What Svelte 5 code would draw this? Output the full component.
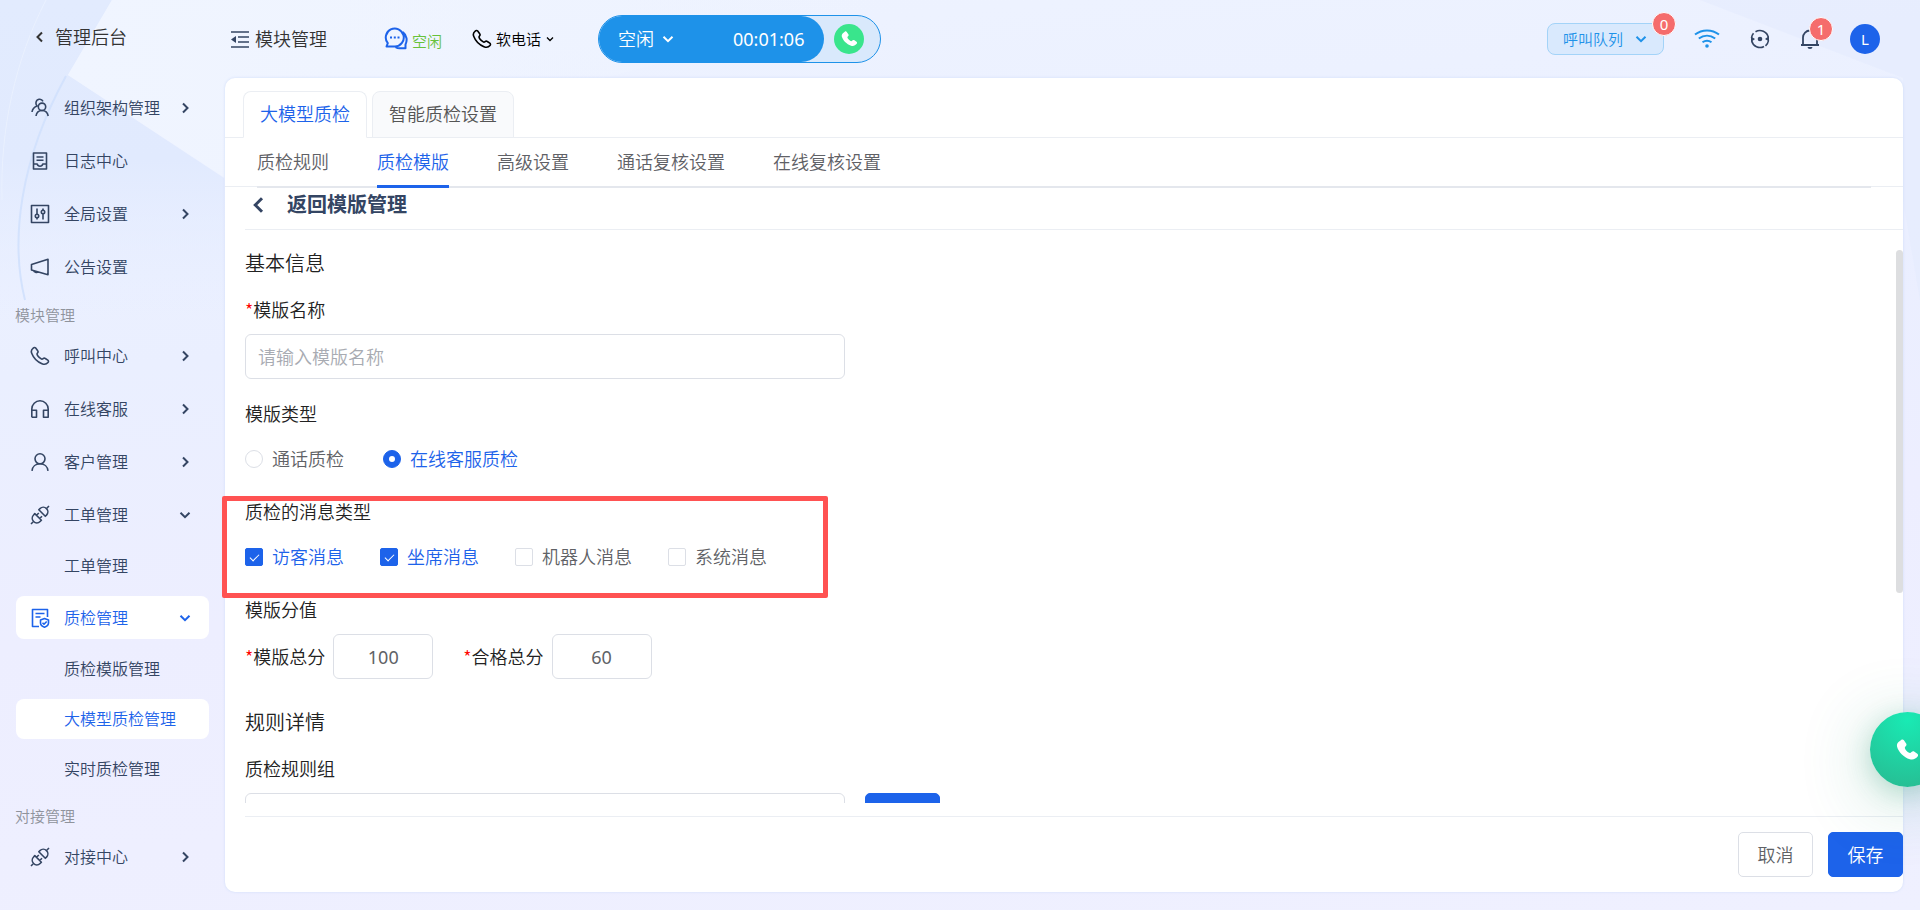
<script lang="ts">
  type Item = { label: string; icon?: string; arrow?: "right" | "down"; kind?: "sub" | "title"; active?: boolean };

  const menu: Item[] = [
    { label: "组织架构管理", icon: "org", arrow: "right" },
    { label: "日志中心", icon: "log" },
    { label: "全局设置", icon: "sliders", arrow: "right" },
    { label: "公告设置", icon: "horn" },
    { label: "模块管理", kind: "title" },
    { label: "呼叫中心", icon: "phone", arrow: "right" },
    { label: "在线客服", icon: "headset", arrow: "right" },
    { label: "客户管理", icon: "user", arrow: "right" },
    { label: "工单管理", icon: "plug", arrow: "down" },
    { label: "工单管理", kind: "sub" },
    { label: "质检管理", icon: "check", arrow: "down", active: true },
    { label: "质检模版管理", kind: "sub" },
    { label: "大模型质检管理", kind: "sub", active: true },
    { label: "实时质检管理", kind: "sub" },
    { label: "对接管理", kind: "title" },
    { label: "对接中心", icon: "plug", arrow: "right" },
  ];

  const tabs = ["大模型质检", "智能质检设置"];
  const subTabs = ["质检规则", "质检模版", "高级设置", "通话复核设置", "在线复核设置"];
  const types = ["通话质检", "在线客服质检"];

  let tab = $state("大模型质检");
  let subTab = $state("质检模版");
  let name = $state("");
  let type = $state("在线客服质检");
  let total = $state("100");
  let pass = $state("60");
  let messages = $state([
    { label: "访客消息", checked: true },
    { label: "坐席消息", checked: true },
    { label: "机器人消息", checked: false },
    { label: "系统消息", checked: false },
  ]);
</script>

{#snippet chevron(dir: string, size: number)}
  <svg class="chevron" width={size} height={size} viewBox="0 0 12 12">
    {#if dir === "right"}
      <path d="M4 1.5 8.5 6 4 10.5" />
    {:else if dir === "left"}
      <path d="M8 1.5 3.5 6 8 10.5" />
    {:else}
      <path d="M1.5 3.8 6 8.2 10.5 3.8" />
    {/if}
  </svg>
{/snippet}

{#snippet icon(name: string)}
  <svg class="icon" width="20" height="20" viewBox="0 0 20 20">
    {#if name === "org"}
      <circle cx="12" cy="8.800" r="3.700" />
      <path d="M6 18c.5-3.300 2.800-5.500 6-5.500s5.600 2.200 6.200 5.500M13 3.300A3.700 3.700 0 0 0 6 4.500c-.2 1.300.2 2.500 1.200 3.500C4.500 8.800 2.500 10.800 2 14" />
    {:else if name === "log"}
      <path d="M3.500 2h13v16h-13zM6.500 6h7M6.500 9.200h7M3.500 13h3.700c.4 1.500 1.300 2.200 2.800 2.200s2.400-.7 2.800-2.200h3.700" />
    {:else if name === "sliders"}
      <path d="M1.500 1.500h17v17h-17zM7 4.500v6M7 14v1.500M13 4.500v2M13 10v5.500" />
      <circle cx="7" cy="12" r="1.700" />
      <circle cx="13" cy="8" r="1.700" />
    {:else if name === "horn"}
      <path d="M1.500 7.500 18 2.200v15.600L1.500 13zM3.500 13.500c.2 1.700 3.500 2.500 4.700 1.300" />
    {:else if name === "phone"}
      <path d="M3.200 2.200C4 1.300 5 1.200 5.700 2L7.700 4.800c.6.800.4 1.500-.2 2.200-.8.900-.7 1.500.2 2.700 1 1.300 2 2.200 3.200 3 .9.600 1.500.5 2.200-.1.700-.6 1.500-.7 2.200-.1l2.500 1.700c.8.600.9 1.500.2 2.300-1.400 1.700-3.700 2.200-6 1.200-4.800-2-8.700-6.200-10.300-10.500C.8 5.200 1.500 3.600 3.200 2.200z" />
    {:else if name === "headset"}
      <path d="M1.800 18.200V10a8.200 8.200 0 0 1 16.400 0v8.200h-4.700v-7h4.700M1.800 11.200h4.700v7H1.800" />
    {:else if name === "user"}
      <circle cx="10" cy="6.800" r="5" />
      <path d="M2 18.800c.4-4 3.500-7 8-7s7.600 3 8 7" />
    {:else if name === "plug"}
      <path d="M1 19l2-2M17 3l2-2M4.800 8.600l6.600 6.600-1.300 1.300a4.600 4.600 0 0 1-6.500 0 4.600 4.600 0 0 1 0-6.500zM8.800 4.800l6.500 6.500 1.200-1.200a4.600 4.600 0 0 0 0-6.500 4.600 4.600 0 0 0-6.500 0zM6.500 10.300l2.300-2.300M9.700 13.500l2.300-2.300" />
    {:else}
      <path d="M9 18.500H2.500v-17h15v7.500M5.500 5.500h9M5.500 9h5" />
      <path d="M14.500 10.500l4 1.500v3c0 2-1.500 3.300-4 4.200-2.500-.9-4-2.200-4-4.200v-3zM12.500 14.700l1.500 1.500 2.700-2.700" />
    {/if}
  </svg>
{/snippet}

{#snippet handset(size: number)}
  <svg class="handset" width={size} height={size} viewBox="0 0 20 20">
    <path d="M2.300 2.800 4.700.8c.8-.6 1.900-.5 2.500.3l2 2.900c.6.900.4 1.900-.4 2.600-1 .9-1 1.600-.2 2.900.9 1.300 1.700 2 2.900 2.800 1 .6 1.700.5 2.600-.4.800-.8 1.800-.9 2.700-.3l2.600 1.900c.8.600.9 1.700.2 2.500-1.500 2-4 3.300-7 2.400C7 16.800 2.200 11.500 1 7 .6 5.400 1.100 3.900 2.300 2.800z" />
  </svg>
{/snippet}

<div class="layout">
  <svg class="backdrop" viewBox="0 0 1920 910" preserveAspectRatio="none" aria-hidden="true">
    <defs>
      <linearGradient id="shade" x1="0" y1="0" x2="0" y2="1">
        <stop offset="0" stop-color="#e2ebfe" />
        <stop offset=".5" stop-color="#e1eafe" />
        <stop offset="1" stop-color="#e6edff" stop-opacity="0" />
      </linearGradient>
      <linearGradient id="light" x1="0" y1="0" x2="1" y2="0">
        <stop offset="0" stop-color="#f0f5ff" />
        <stop offset="1" stop-color="#f0f5ff" stop-opacity="0" />
      </linearGradient>
    </defs>
    <path d="M0 0H112L68 75 224 178V320H0z" fill="url(#shade)" />
    <path d="M112 0H900L225 178 68 75z" fill="url(#light)" />
    <path d="M66 76C20 160 10 240 25 300" fill="none" stroke="#d3e2fd" stroke-width="2" />
    <path d="M46 0C15 60 0 130 2 200" fill="none" stroke="#eaf1ff" stroke-width="1" />
    <path d="M1700 0H1920V300L1903 200V78z" fill="#e4ebfe" opacity=".6" />
  </svg>

  <aside class="sidebar">
    <a class="home" href="#home">{@render chevron("left", 12)}<span>管理后台</span></a>
    <nav class="menu">
      {#each menu as item}
        {#if item.kind === "title"}
          <div class="menu-title">{item.label}</div>
        {:else}
          <a href="#menu" class="menu-item" class:sub={item.kind === "sub"} class:active={item.active}>
            {#if item.icon}{@render icon(item.icon)}{/if}
            <span>{item.label}</span>
            {#if item.arrow}{@render chevron(item.arrow, 12)}{/if}
          </a>
        {/if}
      {/each}
    </nav>
  </aside>

  <div class="main">
    <header class="topbar">
      <button class="plain module">
        <svg width="18" height="18" viewBox="0 0 18 18">
          <path d="M0 2h18M7 7h11M7 12h11M0 17h18" fill="none" stroke="#344563" stroke-width="1.600" />
          <path d="M5 6v7L0 9.500z" fill="#344563" />
        </svg>
        模块管理
      </button>
      <button class="plain chat">
        <svg width="24" height="24" viewBox="0 0 24 24">
          <path d="M2.500 19.500l1.300-3.300A9 9 0 1 1 11 19.500zM18.800 5c4.500 3.500 4.500 9 2.700 12.500v3.800H15.500c-1.500 0-2.700-.4-3.800-1.200" fill="none" stroke="#1d63ea" stroke-width="2" stroke-linejoin="round" />
          <path d="M6 10.500h2M9.800 10.500h2M13.500 10.500h2" stroke="#1d63ea" stroke-width="2" />
        </svg>
        <span>空闲</span>
      </button>
      <button class="plain softphone">
        {@render icon("phone")}
        <span>软电话</span>
        {@render chevron("down", 8)}
      </button>
      <div class="call">
        <button class="call-state">
          <span>空闲</span>
          {@render chevron("down", 12)}
          <time>00:01:06</time>
        </button>
        <button class="call-dial" aria-label="拨号">{@render handset(16)}</button>
      </div>

      <div class="tools">
        <button class="queue">
          呼叫队列 {@render chevron("down", 12)}
          <span class="badge">0</span>
        </button>
        <svg class="wifi" width="26" height="20" viewBox="0 0 26 20">
          <path d="M1 5.500c7-5.400 17-5.400 24 0M4.800 9.500c5-3.800 11.400-3.800 16.400 0M8.500 13.300c2.800-2 6.200-2 9 0" />
          <circle cx="13" cy="17" r="1.800" />
        </svg>
        <button class="plain refresh" aria-label="刷新">
          <svg width="20" height="20" viewBox="0 0 20 20">
            <path d="M5.500 2.800a8.500 8.500 0 0 1 12.800 5.500M18.500 11.500a8.500 8.500 0 0 1-3 5.300M14 17.500A8.500 8.500 0 0 1 1.700 12M1.500 9a8.500 8.500 0 0 1 2-4.700" fill="none" stroke="#344563" stroke-width="1.600" />
            <circle cx="10" cy="10" r="2.300" fill="#344563" />
            <path d="M19 7v5.500l-4-2.500zM1 13V7.500l4 2.500z" fill="#344563" />
          </svg>
        </button>
        <button class="plain bell" aria-label="通知">
          <svg width="20" height="20" viewBox="0 0 20 20">
            <path d="M1 16h18M3 16V8.500a7 7 0 0 1 14 0V16M10 1V0" fill="none" stroke="#344563" stroke-width="1.800" />
            <path d="M7.500 18h5a2.500 2 0 0 1-5 0z" fill="#344563" />
          </svg>
          <span class="badge">1</span>
        </button>
        <button class="avatar">L</button>
      </div>
    </header>

    <section class="card">
      <div class="tabs">
        {#each tabs as t}
          <button class="tab" class:active={tab === t} onclick={() => (tab = t)}>{t}</button>
        {/each}
      </div>
      <div class="sub-tabs">
        <div class="sub-tabs-inner">
          {#each subTabs as t}
            <button class="sub-tab" class:active={subTab === t} onclick={() => (subTab = t)}>{t}</button>
          {/each}
        </div>
      </div>

      <a class="back" href="#templates">{@render chevron("left", 18)}<span>返回模版管理</span></a>

      <div class="scroll-wrap">
        <form id="template" class="scroll">
          <h2>基本信息</h2>
          <label class="field-label" for="name"><i>*</i>模版名称</label>
          <input id="name" class="text wide" type="text" placeholder="请输入模版名称" bind:value={name} />

          <fieldset class="type">
            <legend>模版类型</legend>
            <div class="choices radios">
              {#each types as t}
                <label><input type="radio" name="type" value={t} bind:group={type} /><span>{t}</span></label>
              {/each}
            </div>
          </fieldset>

          <fieldset class="messages">
            <legend>质检的消息类型</legend>
            <div class="choices">
              {#each messages as m}
                <label><input type="checkbox" bind:checked={m.checked} /><span>{m.label}</span></label>
              {/each}
            </div>
            <div class="highlight"></div>
          </fieldset>

          <fieldset class="score">
            <legend>模版分值</legend>
            <div class="scores">
              <label for="total"><i>*</i>模版总分</label>
              <input id="total" class="text" type="text" bind:value={total} />
              <label for="pass"><i>*</i>合格总分</label>
              <input id="pass" class="text" type="text" bind:value={pass} />
            </div>
          </fieldset>

          <h2 class="rules">规则详情</h2>
          <label class="field-label" for="group">质检规则组</label>
          <div class="group">
            <input id="group" class="text wide" type="text" />
            <button type="button" class="primary" aria-label="添加规则组"></button>
          </div>
        </form>
        <div class="thumb"></div>
      </div>

      <footer>
        <button class="secondary">取消</button>
        <button class="primary">保存</button>
      </footer>
    </section>
  </div>

  <div class="fab-layer">
    <button class="fab" aria-label="电话">{@render handset(22)}</button>
  </div>
</div>

<style>
  :global(body) {
    margin: 0;
    background: #edf0ff;
    color: #222;
    font-family: "Noto Sans", "Noto Sans CJK SC", sans-serif;
    font-size: 18px;
    font-weight: 350;
    line-height: 24px;
  }
  button,
  input {
    font: inherit;
    box-sizing: border-box;
  }
  button {
    cursor: pointer;
    padding: 0;
    white-space: nowrap;
  }
  a {
    text-decoration: none;
  }
  svg {
    flex: none;
    display: block;
  }
  .chevron {
    fill: none;
    stroke: currentColor;
    stroke-width: 2;
  }
  .icon {
    fill: none;
    stroke: currentColor;
    stroke-width: 1.600;
    stroke-linejoin: round;
  }
  .handset {
    fill: currentColor;
  }

  .layout {
    position: relative;
    display: flex;
    height: 100vh;
    min-height: 600px;
    background: linear-gradient(175deg, #eef3ff 0%, #eaefff 35%, #edeeff 60%, #eff0ff 100%);
  }
  .backdrop {
    position: absolute;
    inset: 0;
    width: 100%;
    height: 100%;
  }
  .sidebar {
    position: relative;
    flex: none;
    width: 225px;
    color: #344563;
    font-size: 16px;
  }
  .home {
    display: flex;
    align-items: center;
    gap: 9px;
    height: 73px;
    padding-left: 34px;
    color: #333;
    font-size: 18px;
  }
  .menu {
    display: flex;
    flex-direction: column;
    gap: 10px;
    padding: 13px 16px 0;
  }
  .menu-item {
    display: flex;
    align-items: center;
    height: 43px;
    padding: 0 18px 0 14px;
    border-radius: 8px;
    color: inherit;
  }
  .menu-item span {
    flex: 1;
    margin-left: 14px;
  }
  .menu-item.sub {
    height: 40px;
    padding-left: 34px;
  }
  .menu-item.active {
    background: #fff;
    color: #1d63ea;
  }
  .menu-title {
    height: 21px;
    margin-left: -1px;
    padding-top: 5px;
    color: #8f939c;
    font-size: 15px;
  }

  .main {
    position: relative;
    flex: 1;
    min-width: 0;
    display: flex;
    flex-direction: column;
    padding: 0 17px 18px 0;
  }
  .topbar {
    display: flex;
    align-items: center;
    flex: none;
    height: 78px;
    padding-left: 6px;
  }
  .plain {
    display: flex;
    align-items: center;
    border: 0;
    background: none;
    color: #333;
  }
  .module {
    gap: 6px;
  }
  .chat {
    gap: 4px;
    margin-left: 57px;
    font-size: 15px;
  }
  .chat span {
    padding-top: 3px;
    color: #67c23a;
  }
  .softphone {
    gap: 4px;
    margin-left: 30px;
    color: #000;
    font-size: 15px;
  }
  .softphone .chevron {
    margin-left: 1px;
  }
  .call {
    display: flex;
    align-items: center;
    gap: 10px;
    box-sizing: border-box;
    height: 48px;
    margin-left: 44px;
    padding-right: 16px;
    border: 1px solid #1e92e9;
    border-radius: 24px;
    background: #d9e9fc;
  }
  .call-state {
    display: flex;
    align-items: center;
    gap: 8px;
    height: 46px;
    padding: 0 20px 0 19px;
    border: 0;
    border-radius: 23px;
    background: #1e92e9;
    color: #fff;
  }
  .call-state time {
    margin-left: 51px;
    font-weight: 400;
  }
  .call-dial {
    display: grid;
    place-items: center;
    width: 30px;
    height: 30px;
    border: 0;
    border-radius: 50%;
    background: #39e58c;
    color: #fff;
  }
  .tools {
    display: flex;
    align-items: center;
    gap: 30px;
    margin-left: auto;
    padding-right: 23px;
  }
  .queue {
    position: relative;
    display: flex;
    align-items: center;
    gap: 12px;
    height: 32px;
    padding: 0 16px 0 15px;
    border: 1px solid #a3d3f8;
    border-radius: 8px;
    background: #d9e9fd;
    color: #1e92e9;
    font-size: 15px;
  }
  .badge {
    position: absolute;
    top: -12px;
    right: -13px;
    width: 22px;
    height: 22px;
    border: 1px solid #fff;
    border-radius: 12px;
    background: #f56c6c;
    color: #fff;
    font-size: 15px;
    font-weight: 400;
    line-height: 22px;
    text-align: center;
  }
  .bell {
    position: relative;
  }
  .wifi {
    fill: none;
    stroke: #1e92e9;
    stroke-width: 2;
  }
  .wifi circle {
    fill: #1e92e9;
    stroke: none;
  }
  .avatar {
    width: 30px;
    height: 30px;
    border: 0;
    border-radius: 50%;
    background: #1d63ea;
    color: #fff;
    font-size: 15px;
    font-weight: 400;
  }

  .card {
    flex: 1;
    min-height: 0;
    display: flex;
    flex-direction: column;
    border-radius: 10px;
    background: #fff;
    box-shadow: 0 0 3px #cfdcf8;
  }
  .tabs {
    display: flex;
    gap: 5px;
    padding: 13px 18px 0;
    border-bottom: 1px solid #ebeef3;
  }
  .tab {
    height: 47px;
    margin-bottom: -1px;
    padding: 0 16px 2px;
    border: 1px solid #ebeef3;
    border-radius: 8px 8px 0 0;
    background: #f9fafc;
    color: #555;
  }
  .tab.active {
    border-bottom-color: #fff;
    background: #fff;
    color: #1d63ea;
  }
  .sub-tabs {
    padding: 0 32px;
    border-bottom: 1px solid #ebeef3;
  }
  .sub-tabs-inner {
    display: flex;
    gap: 48px;
    margin-bottom: -2px;
    border-bottom: 2px solid #e4e7ed;
  }
  .sub-tab {
    height: 50px;
    margin-bottom: -2px;
    border: 0;
    border-bottom: 3px solid transparent;
    background: none;
    color: #5f6166;
  }
  .sub-tab.active {
    border-color: #1d63ea;
    color: #1d63ea;
  }
  .back {
    display: flex;
    align-items: center;
    gap: 19px;
    flex: none;
    height: 35px;
    margin-left: 20px;
    padding: 0 0 7px 5px;
    border-bottom: 1px solid #ebeef3;
    color: #344563;
    font-size: 20px;
    font-weight: 700;
  }

  .scroll-wrap {
    position: relative;
    flex: 1;
    min-height: 0;
    margin: 20px 0 0 -4px;
  }
  .scroll {
    height: 100%;
    overflow: hidden;
    padding-left: 24px;
  }
  h2 {
    margin: 0;
    font-size: 20px;
    font-weight: inherit;
    line-height: 28px;
  }
  i {
    color: #f00;
    font-family: "Noto Sans CJK SC", sans-serif;
    font-style: normal;
    line-height: 20px;
  }
  .field-label {
    display: block;
    height: 24px;
    margin: 20px 0 12px;
  }
  .text {
    height: 45px;
    padding: 0 12px;
    border: 1px solid #dcdfe6;
    border-radius: 6px;
    background: #fff;
    color: #606266;
    outline: 0;
  }
  .text::placeholder {
    color: #a8abb2;
    opacity: 1;
  }
  .wide {
    display: block;
    width: 600px;
    max-width: 80%;
  }
  fieldset {
    position: relative;
    margin: 0;
    padding: 0;
    border: 0;
  }
  legend {
    height: 24px;
    padding: 0;
  }
  .type {
    margin-top: 23px;
  }
  .messages {
    margin-top: 29px;
  }
  .score {
    margin-top: 29px;
  }
  .choices {
    display: flex;
    gap: 36px;
    height: 24px;
    margin-top: 21px;
    color: #606266;
  }
  .radios {
    gap: 39px;
  }
  .choices label {
    display: flex;
    align-items: center;
    gap: 9px;
  }
  .choices input {
    appearance: none;
    display: grid;
    place-items: center;
    width: 18px;
    height: 18px;
    margin: 0;
    border: 1px solid #dcdfe6;
    border-radius: 2px;
    background: #fff;
  }
  .choices input[type="radio"] {
    border-radius: 50%;
  }
  .choices input:checked {
    border-color: #1d63ea;
    background: #1d63ea;
  }
  .choices input:checked + span {
    color: #1d63ea;
  }
  .choices input[type="radio"]:checked::after {
    content: "";
    width: 6px;
    height: 6px;
    border-radius: 50%;
    background: #fff;
  }
  .choices input[type="checkbox"]:checked::after {
    content: "";
    width: 4px;
    height: 8px;
    margin-bottom: 2px;
    border: solid #fff;
    border-width: 0 1px 1px 0;
    transform: rotate(45deg);
  }
  .highlight {
    position: absolute;
    top: -28px;
    left: -23px;
    box-sizing: border-box;
    width: 606px;
    height: 102px;
    border: 5px solid #ff5252;
    border-radius: 2px;
    pointer-events: none;
  }
  .scores {
    display: flex;
    align-items: center;
    gap: 8px;
    margin-top: 12px;
  }
  .scores .text {
    width: 100px;
    font-weight: 400;
    text-align: center;
  }
  .scores .text + label {
    margin-left: 22px;
  }
  .rules {
    margin-top: 30px;
  }
  .group {
    display: flex;
    gap: 20px;
  }
  .thumb {
    position: absolute;
    top: 0;
    right: 0;
    width: 7px;
    height: 62%;
    border-radius: 4px;
    background: #dddee0;
  }
  .primary,
  .secondary {
    height: 45px;
    min-width: 75px;
    border: 1px solid #1d63ea;
    border-radius: 5px;
    background: #1d63ea;
    color: #fff;
  }
  .secondary {
    border-color: #dcdfe6;
    background: #fff;
    color: #606266;
  }
  footer {
    display: flex;
    justify-content: flex-end;
    gap: 15px;
    margin: 13px 0 0 20px;
    padding: 15px 0;
    border-top: 1px solid #ebeef3;
  }

  .fab-layer {
    position: absolute;
    inset: 0;
    overflow: hidden;
    pointer-events: none;
  }
  .fab {
    position: absolute;
    right: -25px;
    bottom: 123px;
    display: flex;
    align-items: center;
    width: 75px;
    height: 75px;
    padding-left: 26px;
    border: 0;
    border-radius: 50%;
    background: radial-gradient(circle at 50% 10%, #19eab4, #28b990);
    box-shadow: 0 12px 70px rgba(34, 150, 110, 0.3), 0 6px 24px rgba(34, 150, 110, 0.25);
    color: #fff;
    pointer-events: auto;
  }
</style>
